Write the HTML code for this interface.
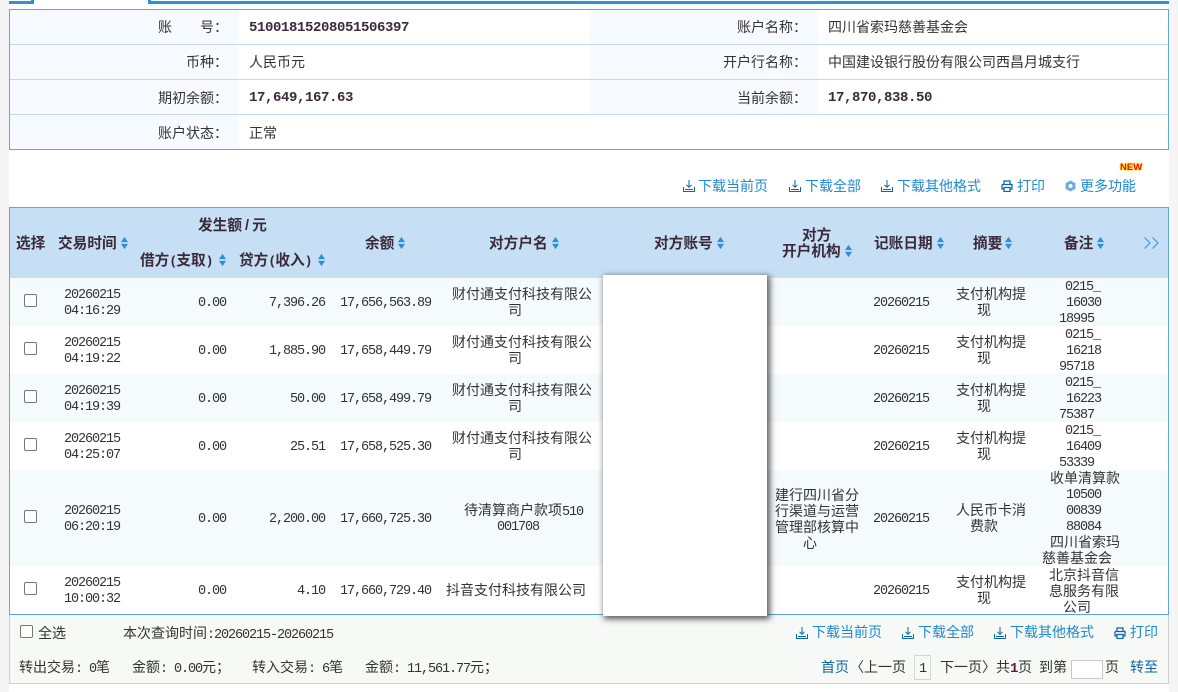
<!DOCTYPE html>
<html lang="zh"><head><meta charset="utf-8"><title>账户明细</title>
<style>
html,body{margin:0;padding:0;width:1178px;height:692px;overflow:hidden;background:#fff}
body{position:relative;font:14px/16px "Liberation Sans","WenQuanYi Zen Hei","Noto Sans CJK SC",sans-serif;color:#333}
.a{position:absolute}
.t{position:absolute;white-space:nowrap;line-height:16px}
.c{text-align:center}
.r{text-align:right}
.n{font-family:"Liberation Mono",monospace;font-size:13.5px;letter-spacing:-1.1px}
.t.n{margin-top:2px}
.b{font-family:"Liberation Mono",monospace;font-size:14px;letter-spacing:-.4px;font-weight:bold;color:#3a2a3a}
.h{font-weight:bold;color:#3a2a3a;font-size:14.67px}
.t.h{margin-top:1px}
.p{font-family:"Liberation Mono",monospace;font-size:13px;letter-spacing:-.8px}
.l{color:#1f8ad0}
.d{color:#0b66a8}
svg{position:absolute;overflow:visible}
.cb{position:absolute;width:11px;height:11px;border:1px solid #767676;border-radius:2px;background:#fff}
</style></head><body>
<svg width="0" height="0" style="position:absolute"><defs>
<symbol id="s" viewBox="0 0 8 14"><path d="M4 0 8 6H0Z M0 8H8L4 14Z" fill="#2a90d8"/></symbol>
<symbol id="dl" viewBox="0 0 12 12"><path d="M6 0V7M3.500 4.800 6 7.300 8.500 4.800M.5 7V11.500H11.500V7M2 9.500H10" fill="none" stroke="#0b66a8" stroke-width="1"/></symbol>
<symbol id="pr" viewBox="0 0 12 12"><path d="M3 4V1H9V4M1 4.500H11V9H9M3 9H1V4.500M3 7.500H9V11.500H3Z" fill="none" stroke="#0b66a8" stroke-width="1.300"/></symbol>
</defs></svg>

<div class="a" style="left:0;top:0;width:9px;height:692px;background:#f5f5f5"></div>
<div class="a" style="left:1169px;top:0;width:9px;height:692px;background:#f5f5f5"></div>

<div class="a" style="left:9px;top:0;width:22px;height:1px;border-bottom:3px solid #2a93d5;border-right:3px solid #2a93d5"></div>
<div class="a" style="left:148px;top:0;height:1px;border-bottom:3px solid #2a93d5;border-left:3px solid #2a93d5;width:1018px"></div>

<!-- account info -->
<div class="a" style="left:9px;top:9px;width:1158px;height:139px;border:1px solid #62a4dc;background:#fff"></div>
<div class="a" style="left:10px;top:10px;width:229px;height:104px;background:#f7fbff"></div>
<div class="a" style="left:10px;top:115px;width:229px;height:34px;background:#f7fbff"></div>
<div class="a" style="left:590px;top:10px;width:228px;height:104px;background:#f7fbff"></div>
<div class="a" style="left:10px;top:44px;width:1158px;height:1px;background:#c3d9ec"></div>
<div class="a" style="left:10px;top:79px;width:1158px;height:1px;background:#c3d9ec"></div>
<div class="a" style="left:10px;top:114px;width:1158px;height:1px;background:#c3d9ec"></div>

<span class="t" style="left:158px;top:19px">账</span><span class="t" style="left:200px;top:19px">号：</span>
<span class="t" style="left:186px;top:54px">币种：</span>
<span class="t" style="left:158px;top:90px">期初余额：</span>
<span class="t" style="left:158px;top:125px">账户状态：</span>
<span class="t b" style="left:249px;top:20px">51001815208051506397</span>
<span class="t" style="left:249px;top:54px">人民币元</span>
<span class="t b" style="left:249px;top:90px">17,649,167.63</span>
<span class="t" style="left:249px;top:125px">正常</span>
<span class="t" style="left:737px;top:19px">账户名称：</span>
<span class="t" style="left:723px;top:54px">开户行名称：</span>
<span class="t" style="left:737px;top:90px">当前余额：</span>
<span class="t" style="left:828px;top:19px">四川省索玛慈善基金会</span>
<span class="t" style="left:828px;top:54px">中国建设银行股份有限公司西昌月城支行</span>
<span class="t b" style="left:828px;top:90px">17,870,838.50</span>

<!-- toolbar -->
<span class="t" style="left:1120px;top:161px;font:bold 9.5px/14px 'Liberation Sans',sans-serif;color:#f01010;text-shadow:0 0 2px #ffe000,0 0 2px #ffe000,0 0 1px #ffe000">NEW</span>
<svg style="left:683px;top:180px" width="12" height="12"><use href="#dl"/></svg><span class="t l" style="left:698px;top:178px">下载当前页</span>
<svg style="left:789px;top:180px" width="12" height="12"><use href="#dl"/></svg><span class="t l" style="left:805px;top:178px">下载全部</span>
<svg style="left:881px;top:180px" width="12" height="12"><use href="#dl"/></svg><span class="t l" style="left:897px;top:178px">下载其他格式</span>
<svg style="left:1001px;top:180px" width="12" height="12"><use href="#pr"/></svg><span class="t l" style="left:1017px;top:178px">打印</span>
<svg style="left:1065px;top:180px" width="11" height="12" viewBox="0 0 11 12"><path d="M5.500 .5 10.500 3.200V8.800L5.500 11.500.5 8.800V3.200Z" fill="#6aaee0"/><circle cx="5.500" cy="6" r="2" fill="#fff"/></svg><span class="t l" style="left:1080px;top:178px">更多功能</span>

<!-- table -->
<div class="a" style="left:9px;top:207px;width:1158px;height:406px;border:1px solid #62a4dc;background:#fff"></div>
<div class="a" style="left:10px;top:208px;width:1158px;height:70px;background:#c7dff5"></div>
<div class="a" style="left:10px;top:278px;width:1158px;height:48px;background:#f5fafd"></div>
<div class="a" style="left:10px;top:374px;width:1158px;height:48px;background:#f5fafd"></div>
<div class="a" style="left:10px;top:470px;width:1158px;height:96px;background:#f5fafd"></div>

<span class="t h" style="left:16px;top:235px">选择</span>
<span class="t h" style="left:58px;top:235px">交易时间</span><svg style="left:121px;top:236px" width="7" height="14"><use href="#s"/></svg>
<span class="t h" style="left:198px;top:217px">发生额<span style="margin:0 3px">/</span>元</span>
<span class="t h" style="left:140px;top:252px">借方<span class="p">(</span>支取<span class="p">)</span></span><svg style="left:219px;top:253px" width="7" height="14"><use href="#s"/></svg>
<span class="t h" style="left:239px;top:252px">贷方<span class="p">(</span>收入<span class="p">)</span></span><svg style="left:318px;top:253px" width="7" height="14"><use href="#s"/></svg>
<span class="t h" style="left:365px;top:235px">余额</span><svg style="left:398px;top:236px" width="7" height="14"><use href="#s"/></svg>
<span class="t h" style="left:489px;top:235px">对方户名</span><svg style="left:552px;top:236px" width="7" height="14"><use href="#s"/></svg>
<span class="t h" style="left:654px;top:235px">对方账号</span><svg style="left:717px;top:236px" width="7" height="14"><use href="#s"/></svg>
<span class="t h" style="left:802px;top:227px">对方</span>
<span class="t h" style="left:782px;top:243px">开户机构</span><svg style="left:845px;top:244px" width="7" height="14"><use href="#s"/></svg>
<span class="t h" style="left:874px;top:235px">记账日期</span><svg style="left:937px;top:236px" width="7" height="14"><use href="#s"/></svg>
<span class="t h" style="left:973px;top:235px">摘要</span><svg style="left:1005px;top:236px" width="7" height="14"><use href="#s"/></svg>
<span class="t h" style="left:1064px;top:235px">备注</span><svg style="left:1097px;top:236px" width="7" height="14"><use href="#s"/></svg>
<svg style="left:1144px;top:237px" width="15" height="12" viewBox="0 0 15 12"><path d="M.5 .5 6 6 .5 11.500M8.500 .5 14 6 8.500 11.500" fill="none" stroke="#3f8fd6" stroke-width="1.100"/></svg>

<!-- row 1 -->
<div class="cb" style="left:24px;top:294px"></div>
<span class="t n c" style="left:50px;width:84px;top:286px">20260215</span><span class="t n c" style="left:50px;width:84px;top:302px">04:16:29</span>
<span class="t n" style="right:952px;top:294px">0.00</span>
<span class="t n" style="right:853px;top:294px">7,396.26</span>
<span class="t n" style="right:747px;top:294px">17,656,563.89</span>
<span class="t c" style="left:445px;width:154px;top:286px">财付通支付科技有限公</span><span class="t c" style="left:445px;width:140px;top:302px">司</span>
<span class="t n" style="left:873px;top:294px">20260215</span>
<span class="t c" style="left:955px;width:72px;top:286px">支付机构提</span><span class="t c" style="left:955px;width:58px;top:302px">现</span>
<span class="t n" style="left:1065px;top:278px">0215_</span><span class="t n" style="left:1066px;top:294px">16030</span><span class="t n" style="left:1059px;top:310px">18995</span>

<!-- row 2 -->
<div class="cb" style="left:24px;top:342px"></div>
<span class="t n c" style="left:50px;width:84px;top:334px">20260215</span><span class="t n c" style="left:50px;width:84px;top:350px">04:19:22</span>
<span class="t n" style="right:952px;top:342px">0.00</span>
<span class="t n" style="right:853px;top:342px">1,885.90</span>
<span class="t n" style="right:747px;top:342px">17,658,449.79</span>
<span class="t c" style="left:445px;width:154px;top:334px">财付通支付科技有限公</span><span class="t c" style="left:445px;width:140px;top:350px">司</span>
<span class="t n" style="left:873px;top:342px">20260215</span>
<span class="t c" style="left:955px;width:72px;top:334px">支付机构提</span><span class="t c" style="left:955px;width:58px;top:350px">现</span>
<span class="t n" style="left:1065px;top:326px">0215_</span><span class="t n" style="left:1066px;top:342px">16218</span><span class="t n" style="left:1059px;top:358px">95718</span>

<!-- row 3 -->
<div class="cb" style="left:24px;top:390px"></div>
<span class="t n c" style="left:50px;width:84px;top:382px">20260215</span><span class="t n c" style="left:50px;width:84px;top:398px">04:19:39</span>
<span class="t n" style="right:952px;top:390px">0.00</span>
<span class="t n" style="right:853px;top:390px">50.00</span>
<span class="t n" style="right:747px;top:390px">17,658,499.79</span>
<span class="t c" style="left:445px;width:154px;top:382px">财付通支付科技有限公</span><span class="t c" style="left:445px;width:140px;top:398px">司</span>
<span class="t n" style="left:873px;top:390px">20260215</span>
<span class="t c" style="left:955px;width:72px;top:382px">支付机构提</span><span class="t c" style="left:955px;width:58px;top:398px">现</span>
<span class="t n" style="left:1065px;top:374px">0215_</span><span class="t n" style="left:1066px;top:390px">16223</span><span class="t n" style="left:1059px;top:406px">75387</span>

<!-- row 4 -->
<div class="cb" style="left:24px;top:438px"></div>
<span class="t n c" style="left:50px;width:84px;top:430px">20260215</span><span class="t n c" style="left:50px;width:84px;top:446px">04:25:07</span>
<span class="t n" style="right:952px;top:438px">0.00</span>
<span class="t n" style="right:853px;top:438px">25.51</span>
<span class="t n" style="right:747px;top:438px">17,658,525.30</span>
<span class="t c" style="left:445px;width:154px;top:430px">财付通支付科技有限公</span><span class="t c" style="left:445px;width:140px;top:446px">司</span>
<span class="t n" style="left:873px;top:438px">20260215</span>
<span class="t c" style="left:955px;width:72px;top:430px">支付机构提</span><span class="t c" style="left:955px;width:58px;top:446px">现</span>
<span class="t n" style="left:1065px;top:422px">0215_</span><span class="t n" style="left:1066px;top:438px">16409</span><span class="t n" style="left:1059px;top:454px">53339</span>

<!-- row 5 -->
<div class="cb" style="left:24px;top:510px"></div>
<span class="t n c" style="left:50px;width:84px;top:502px">20260215</span><span class="t n c" style="left:50px;width:84px;top:518px">06:20:19</span>
<span class="t n" style="right:952px;top:510px">0.00</span>
<span class="t n" style="right:853px;top:510px">2,200.00</span>
<span class="t n" style="right:747px;top:510px">17,660,725.30</span>
<span class="t" style="left:464px;top:502px">待清算商户款项<span class="n">510</span></span><span class="t n" style="left:497px;top:518px">001708</span>
<span class="t" style="left:775px;top:487px">建行四川省分</span><span class="t" style="left:775px;top:503px">行渠道与运营</span><span class="t" style="left:775px;top:519px">管理部核算中</span><span class="t" style="left:803px;top:535px">心</span>
<span class="t n" style="left:873px;top:510px">20260215</span>
<span class="t" style="left:956px;top:502px">人民币卡消</span><span class="t" style="left:970px;top:518px">费款</span>
<span class="t" style="left:1050px;top:470px">收单清算款</span><span class="t n" style="left:1066px;top:486px">10500</span><span class="t n" style="left:1066px;top:502px">00839</span><span class="t n" style="left:1066px;top:518px">88084</span><span class="t" style="left:1050px;top:534px">四川省索玛</span><span class="t" style="left:1042px;top:550px">慈善基金会</span>

<!-- row 6 -->
<div class="cb" style="left:24px;top:582px"></div>
<span class="t n c" style="left:50px;width:84px;top:574px">20260215</span><span class="t n c" style="left:50px;width:84px;top:590px">10:00:32</span>
<span class="t n" style="right:952px;top:582px">0.00</span>
<span class="t n" style="right:853px;top:582px">4.10</span>
<span class="t n" style="right:747px;top:582px">17,660,729.40</span>
<span class="t" style="left:446px;top:582px">抖音支付科技有限公司</span>
<span class="t n" style="left:873px;top:582px">20260215</span>
<span class="t c" style="left:955px;width:72px;top:574px">支付机构提</span><span class="t c" style="left:955px;width:58px;top:590px">现</span>
<span class="t" style="left:1049px;top:567px">北京抖音信</span><span class="t" style="left:1049px;top:583px">息服务有限</span><span class="t" style="left:1063px;top:599px">公司</span>

<!-- footer -->
<div class="a" style="left:9px;top:614px;width:1160px;height:1px;background:#5aa5e3"></div>
<div class="a" style="left:9px;top:615px;width:1158px;height:68px;border:1px solid #d0d0d0;border-top:0;background:#f6f9f5"></div>
<div class="cb" style="left:20px;top:625px"></div>
<span class="t" style="left:38px;top:625px">全选</span>
<span class="t" style="left:123px;top:625px">本次查询时间<span class="n">:20260215-20260215</span></span>
<span class="t" style="left:19px;top:659px">转出交易<span class="n">: 0</span>笔</span>
<span class="t" style="left:132px;top:659px">金额<span class="n">: 0.00</span>元；</span>
<span class="t" style="left:252px;top:659px">转入交易<span class="n">: 6</span>笔</span>
<span class="t" style="left:365px;top:659px">金额<span class="n">: 11,561.77</span>元；</span>
<svg style="left:796px;top:627px" width="12" height="12"><use href="#dl"/></svg><span class="t l" style="left:812px;top:624px">下载当前页</span>
<svg style="left:902px;top:627px" width="12" height="12"><use href="#dl"/></svg><span class="t l" style="left:918px;top:624px">下载全部</span>
<svg style="left:994px;top:627px" width="12" height="12"><use href="#dl"/></svg><span class="t l" style="left:1010px;top:624px">下载其他格式</span>
<svg style="left:1114px;top:627px" width="12" height="12"><use href="#pr"/></svg><span class="t l" style="left:1130px;top:624px">打印</span>
<span class="t d" style="left:821px;top:659px">首页</span>
<span class="t" style="left:850px;top:659px">〈上一页</span>
<div class="a c" style="left:914px;top:655px;width:15px;height:23px;border:1px solid #d5d5d5;line-height:23px"><span class="n">1</span></div>
<span class="t" style="left:940px;top:659px">下一页〉</span>
<span class="t" style="left:996px;top:659px">共<span class="b" style="color:#6a1a2a">1</span>页</span>
<span class="t" style="left:1039px;top:659px">到第</span>
<div class="a" style="left:1071px;top:660px;width:30px;height:17px;border:1px solid #c8c8c8;background:#fff"></div>
<span class="t" style="left:1105px;top:659px">页</span>
<span class="t d" style="left:1130px;top:659px">转至</span>

<!-- white overlay card -->
<div class="a" style="left:603px;top:275px;width:164px;height:341px;background:#fff;box-shadow:2px 2px 6px 1px rgba(0,0,0,.65)"></div>
</body></html>
